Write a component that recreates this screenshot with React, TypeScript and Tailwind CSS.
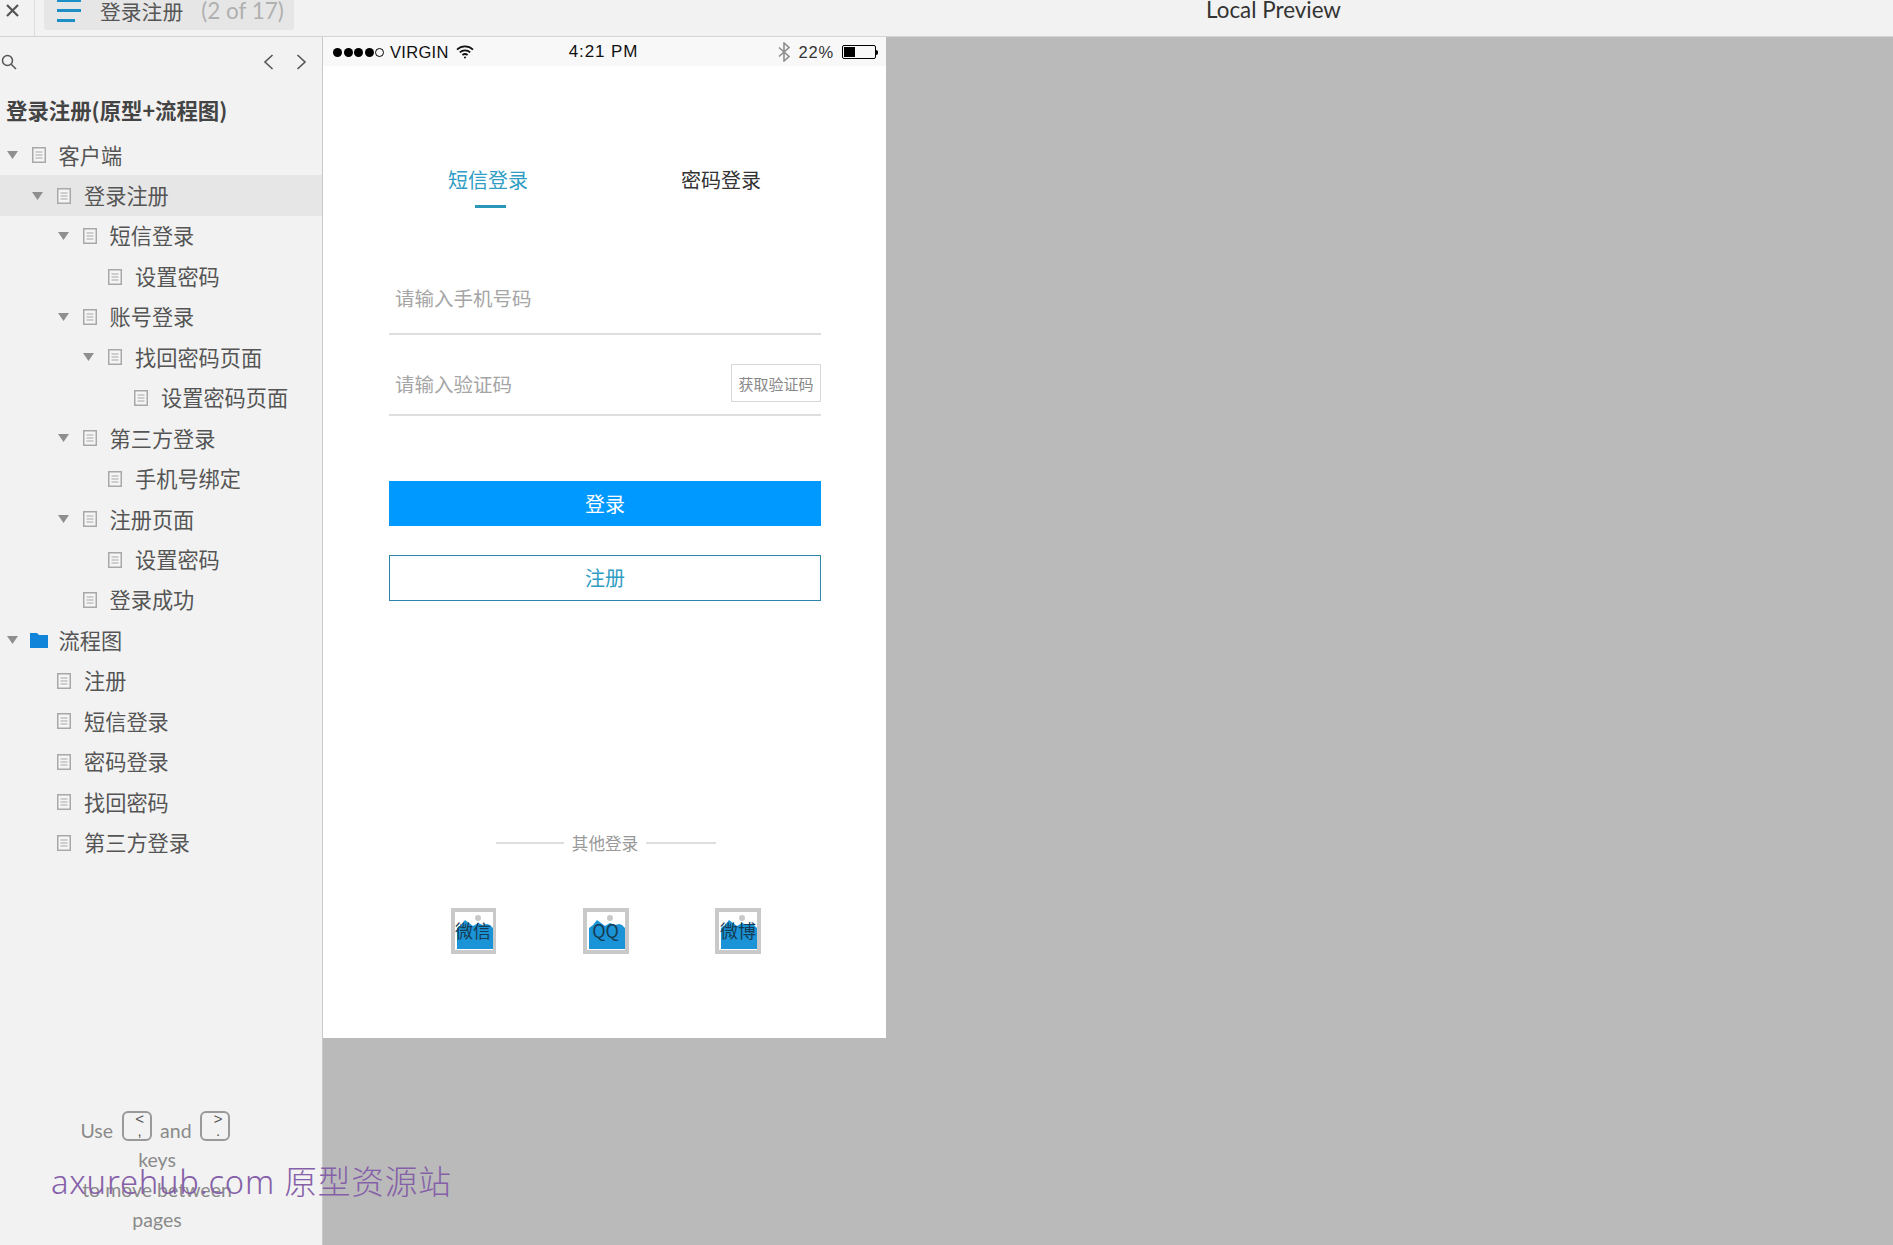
const CJK = 'font-["Noto_Sans_CJK_SC",sans-serif]';

type Row = { label: string; level: number; arrow?: boolean; folder?: boolean; selected?: boolean };

const rows: Row[] = [
  { label: "客户端", level: 0, arrow: true },
  { label: "登录注册", level: 1, arrow: true, selected: true },
  { label: "短信登录", level: 2, arrow: true },
  { label: "设置密码", level: 3 },
  { label: "账号登录", level: 2, arrow: true },
  { label: "找回密码页面", level: 3, arrow: true },
  { label: "设置密码页面", level: 4 },
  { label: "第三方登录", level: 2, arrow: true },
  { label: "手机号绑定", level: 3 },
  { label: "注册页面", level: 2, arrow: true },
  { label: "设置密码", level: 3 },
  { label: "登录成功", level: 2 },
  { label: "流程图", level: 0, arrow: true, folder: true },
  { label: "注册", level: 1 },
  { label: "短信登录", level: 1 },
  { label: "密码登录", level: 1 },
  { label: "找回密码", level: 1 },
  { label: "第三方登录", level: 1 },
];

function PageIcon() {
  return (
    <svg width="14" height="16" viewBox="0 0 14 16" className="shrink-0">
      <rect x="0.75" y="0.75" width="12.5" height="14.5" fill="#f5f5f5" stroke="#a8a8a8" strokeWidth="1.5" />
      <path d="M3.5 5h7M3.5 8h7M3.5 11h7" stroke="#a8a8a8" strokeWidth="1.2" />
    </svg>
  );
}

function FolderIcon() {
  return (
    <svg width="18" height="16" viewBox="0 0 18 16" className="ml-[-2px] shrink-0">
      <path d="M0 1h7l2 2h9v13H0z" fill="#0f84d8" />
    </svg>
  );
}

function Arrow() {
  return (
    <svg width="11" height="8" viewBox="0 0 11 8" className="shrink-0">
      <path d="M0 0h11L5.5 8z" fill="#8f8f8f" />
    </svg>
  );
}

function TreeRow({ row }: { row: Row }) {
  const indent = ["pl-[6.5px]", "pl-[32px]", "pl-[57.5px]", "pl-[83px]", "pl-[109px]"][row.level];
  return (
    <div className={`flex h-[40.45px] items-center ${indent} ${row.selected ? "bg-[#e6e6e6]" : ""}`}>
      <div className="w-[25px] shrink-0">{row.arrow && <Arrow />}</div>
      <div className="flex w-[27px] shrink-0 items-center">{row.folder ? <FolderIcon /> : <PageIcon />}</div>
      <span className="pb-[2px] text-[21.2px] leading-none whitespace-nowrap text-[#555]">{row.label}</span>
    </div>
  );
}

function Key({ top, bottom }: { top: string; bottom: string }) {
  return (
    <span className="mx-[8.5px] mt-[2px] flex h-[30px] w-[30px] flex-col rounded-[6px] border-2 border-[#999] pl-[6px] font-['Liberation_Sans',sans-serif] text-[15px] leading-[12px] text-[#555]">
      <span>{top}</span>
      <span>{bottom}</span>
    </span>
  );
}

function Help() {
  return (
    <div className="mt-auto w-[314px] pb-[10px] text-center font-['Lato',sans-serif] text-[19.5px] leading-[30px] text-[#8a8a8a]">
      <div className="flex h-[36px] items-start justify-center pl-[5px]">
        <span className="mt-[7px]">Use</span>
        <Key top="<" bottom="," />
        <span className="mt-[7px]">and</span>
        <Key top=">" bottom="." />
      </div>
      <div>keys</div>
      <div>to move between</div>
      <div>pages</div>
    </div>
  );
}

function Sidebar() {
  return (
    <aside className="flex w-[323px] shrink-0 flex-col border-r border-[#c9c9c9] bg-[#f2f2f2]">
      <div className="flex h-[49px] items-center justify-between pr-[15px] pl-[1px]">
        <svg width="16" height="16" viewBox="0 0 16 16" fill="none" stroke="#555" strokeWidth="1.5">
          <circle cx="6.5" cy="6.5" r="5" />
          <path d="M10.2 10.2 15 15" />
        </svg>
        <div className="flex gap-[22px]">
          <svg width="11" height="16" viewBox="0 0 11 16" fill="none" stroke="#555" strokeWidth="1.6">
            <path d="M9.5 1 2 8l7.5 7" />
          </svg>
          <svg width="11" height="16" viewBox="0 0 11 16" fill="none" stroke="#555" strokeWidth="1.6">
            <path d="M1.5 1 9 8l-7.5 7" />
          </svg>
        </div>
      </div>
      <div className="flex h-[49px] items-center pl-[6px] text-[21.4px] font-bold whitespace-nowrap text-[#444]">
        登录注册(原型+流程图)
      </div>
      <div>
        {rows.map((r, i) => (
          <TreeRow key={i} row={r} />
        ))}
      </div>
      <Help />
    </aside>
  );
}

function StatusBar() {
  return (
    <div className="flex h-[29px] items-center justify-between bg-[#f8f8f8] pt-[1px] pr-[8px] pl-[10px] font-['Liberation_Sans',sans-serif] text-[16.5px] text-[#111]">
      <div className="flex w-[210px] items-center">
        <div className="flex items-center gap-[1.5px]">
          <span className="h-[9px] w-[9px] rounded-full bg-black" />
          <span className="h-[9px] w-[9px] rounded-full bg-black" />
          <span className="h-[9px] w-[9px] rounded-full bg-black" />
          <span className="h-[9px] w-[9px] rounded-full bg-black" />
          <span className="h-[9px] w-[9px] rounded-full border border-black" />
        </div>
        <span className="ml-[6px] tracking-[0.3px]">VIRGIN</span>
        <svg width="18" height="14" viewBox="0 0 18 14" className="ml-[7px]" fill="none" stroke="#111" strokeWidth="1.8">
          <path d="M1 4.6C5.6.4 12.4.4 17 4.6" />
          <path d="M3.8 7.4c3-2.7 7.4-2.7 10.4 0" />
          <path d="M6.4 10c1.5-1.2 3.7-1.2 5.2 0" />
          <circle cx="9" cy="12.4" r="1" fill="#111" stroke="none" />
        </svg>
      </div>
      <span className="mr-[4px] w-[90px] text-center text-[17px] tracking-[0.9px] whitespace-nowrap">4:21 PM</span>
      <div className="flex w-[210px] items-center justify-end">
        <svg width="12" height="20" viewBox="0 0 12 20" fill="none" stroke="#8e8e8e" strokeWidth="1.6">
          <path d="M1 5.5 11 14.5 6 19V1l5 4.5L1 14.5" />
        </svg>
        <span className="ml-[9px] tracking-[0.8px] text-[#333]">22%</span>
        <div className="ml-[8px] flex h-[14px] w-[34px] items-stretch rounded-[2px] border border-black p-[1px]">
          <div className="w-[11px] bg-black" />
        </div>
        <div className="h-[5px] w-[2px] rounded-r-full bg-black" />
      </div>
    </div>
  );
}

function Social({ label, clip }: { label: string; clip?: boolean }) {
  return (
    <div className={`relative h-[46px] w-[46px] ${clip ? "overflow-hidden" : ""}`}>
      <svg width={clip ? 48 : 46} height="46" viewBox="0 0 46 46">
        <rect x="2" y="2" width="42" height="42" fill="#fff" stroke="#c9c9c9" strokeWidth="4" />
        <circle cx="27" cy="10" r="3" fill="#c9c9c9" />
        <path d="M6 41V20l4-3 4-5 4 3 4 3 5-3 5 2 4-1 3 1 3 3v21z" fill="#1a94d6" />
      </svg>
      <span className="absolute inset-0 flex items-center justify-center pb-[2px] text-[18px] leading-none whitespace-nowrap text-[#163c55]">
        {label}
      </span>
    </div>
  );
}

function Phone() {
  return (
    <section className="flex h-[1001px] w-[563px] shrink-0 flex-col bg-white">
      <StatusBar />
      <div className="flex h-[129px] items-end">
        <div className="ml-[125px] flex w-[80px] flex-col items-center">
          <span className="text-[20px] leading-[30px] whitespace-nowrap text-[#2f9dc4]">短信登录</span>
        </div>
        <div className="ml-[153px] flex w-[80px] flex-col items-center">
          <span className="text-[20px] leading-[30px] whitespace-nowrap text-[#333]">密码登录</span>
        </div>
      </div>
      <div className="mt-[10px] ml-[152px] h-[3px] w-[31px] bg-[#2a96b8]" />
      <div className="mt-[35px] ml-[66px] w-[432px]">
        <div className="flex h-[92px] items-end border-b-2 border-[#dedede] pb-[21px] pl-[6px] text-[19.5px] leading-[29px] text-[#a5a5a5]">
          请输入手机号码
        </div>
        <div className="flex h-[81px] items-end border-b-2 border-[#dedede] pb-[12px] pl-[6px] text-[19.5px] leading-[29px] text-[#a5a5a5]">
          <div className="flex h-[38px] w-full items-center justify-between">
            <span>请输入验证码</span>
            <span className="flex h-[38px] w-[90px] items-center justify-center border border-[#d8d8d8] text-[15px] text-[#888]">
              获取验证码
            </span>
          </div>
        </div>
        <button className={`mt-[65px] block h-[45px] w-full bg-[#0099ff] text-[20px] text-white ${CJK}`}>登录</button>
        <button className={`mt-[29px] block h-[46px] w-full border border-[#2d84a8] bg-white text-[20px] text-[#2f9dc4] ${CJK}`}>
          注册
        </button>
      </div>
      <div className="mt-[230px] ml-[173px] flex w-[220px] items-center justify-between">
        <span className="h-[2px] w-[68px] bg-[#dedede]" />
        <span className="text-[16.6px] leading-[24px] whitespace-nowrap text-[#999]">其他登录</span>
        <span className="h-[2px] w-[70px] bg-[#dedede]" />
      </div>
      <div className="mt-[53px] ml-[127px] flex w-[311px] justify-between">
        <Social label="微信" clip />
        <Social label="QQ" />
        <Social label="微博" />
      </div>
    </section>
  );
}

export default function App() {
  return (
    <div className={`relative flex h-[1245px] w-[1893px] flex-col overflow-hidden bg-[#bababa] ${CJK}`}>
      <header className="flex h-[37px] shrink-0 border-b border-[#d4d4d4] bg-[#f2f2f2]">
        <div className="flex h-[36px] w-[35px] shrink-0 items-start justify-center border-r border-[#dcdcdc] pt-[4px] pr-[9px]">
          <svg width="13" height="13" viewBox="0 0 13 13" stroke="#555" strokeWidth="2.2">
            <path d="M1 1l11 11M12 1 1 12" />
          </svg>
        </div>
        <div className="ml-[9px] flex h-[30px] w-[250px] shrink-0 items-start rounded-b-[3px] bg-[#e6e6e6] pl-[13px]">
          <div className="mt-[-1px] flex w-[24px] flex-col gap-[7px]">
            <span className="h-[3px] w-[24px] bg-[#1b8fc6]" />
            <span className="h-[3px] w-[24px] bg-[#1b8fc6]" />
            <span className="h-[3px] w-[18px] bg-[#1b8fc6]" />
          </div>
          <span className="mt-[-4px] ml-[19px] text-[20.8px] leading-[30px] whitespace-nowrap text-[#555]">登录注册</span>
          <span className="mt-[-4px] ml-[18px] font-['Lato',sans-serif] text-[22.5px] leading-[30px] whitespace-nowrap text-[#b0b0b0]">
            (2 of 17)
          </span>
        </div>
        <div className="flex-1 pl-[912px]">
          <span className="relative top-[-5px] font-['Lato',sans-serif] text-[22.4px] leading-[30px] whitespace-nowrap text-[#333]">
            Local Preview
          </span>
        </div>
      </header>
      <main className="flex min-h-0 flex-1 items-start">
        <div className="flex h-full">
          <Sidebar />
        </div>
        <Phone />
      </main>
      <div className="absolute top-[1158px] left-[51px] font-['Noto_Sans','Noto_Sans_CJK_SC',sans-serif] text-[32.7px] leading-[48px] font-light tracking-[0.8px] whitespace-nowrap text-[#8560a8]">
        axurehub.com 原型资源站
      </div>
    </div>
  );
}
